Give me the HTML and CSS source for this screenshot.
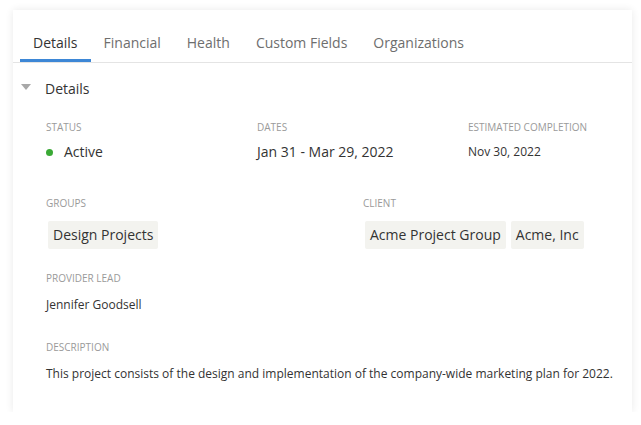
FILE: index.html
```html
<!DOCTYPE html>
<html lang="en">
<head>
    <meta charset="UTF-8">
    <title>Project Details</title>
    <link rel="stylesheet" href="styles.css">
</head>
<body>

<div class="card">
    <nav class="tabs">
        <a class="tab active">Details</a>
        <a class="tab">Financial</a>
        <a class="tab">Health</a>
        <a class="tab">Custom Fields</a>
        <a class="tab">Organizations</a>
    </nav>

    <section class="section">
        <header class="section-head">
            <span class="caret"></span>
            <h2>Details</h2>
        </header>

        <div class="row row-three">
            <div class="field">
                <div class="label">Status</div>
                <div class="value big"><span class="dot"></span>Active</div>
            </div>
            <div class="field">
                <div class="label">Dates</div>
                <div class="value big">Jan 31 - Mar 29, 2022</div>
            </div>
            <div class="field">
                <div class="label">Estimated Completion</div>
                <div class="value">Nov 30, 2022</div>
            </div>
        </div>

        <div class="row row-two">
            <div class="field">
                <div class="label">Groups</div>
                <div class="chips">
                    <span class="chip">Design Projects</span>
                </div>
            </div>
            <div class="field">
                <div class="label">Client</div>
                <div class="chips">
                    <span class="chip">Acme Project Group</span>
                    <span class="chip">Acme, Inc</span>
                </div>
            </div>
        </div>

        <div class="row row-lead">
            <div class="field">
                <div class="label">Provider Lead</div>
                <div class="value">Jennifer Goodsell</div>
            </div>
        </div>

        <div class="row row-desc">
            <div class="field">
                <div class="label">Description</div>
                <div class="value">This project consists of the design and implementation of the company-wide marketing plan for 2022.</div>
            </div>
        </div>
    </section>
</div>

</body>
</html>
```

FILE: styles.css
```css
html
{
    font-family: "Open Sans", "Liberation Sans", sans-serif;
    color: #333;
}

body
{
    margin: 0;
    background: #fff;
}

.card
{
    margin: 10px 9px 0 13px;
    height: 402px;
    background: #fff;
    box-shadow: 0 0 8px rgba(0, 0, 0, 0.09);
}

.tabs
{
    display: flex;
    padding-left: 7px;
    border-bottom: 1px solid #e4e4e4;
}

.tab
{
    padding: 23px 13px 6px;
    font-size: 14px;
    line-height: 20px;
    color: #6e6e6e;
    border-bottom: 3px solid transparent;
}

.tab.active
{
    color: #333;
    border-bottom-color: #3d87d6;
}

.section
{
    padding: 14px 0 0 8px;
}

.section-head
{
    display: flex;
    align-items: center;
    height: 22px;
}

.caret
{
    width: 0;
    height: 0;
    border-left: 5.5px solid transparent;
    border-right: 5.5px solid transparent;
    border-top: 6px solid #a8a8a8;
    margin: 0 14px 3px 0;
}

.section-head h2
{
    margin: 0;
    font-size: 14px;
    font-weight: normal;
}

.row
{
    display: flex;
    padding-left: 25px;
    margin-top: 21px;
}

.row-three .field:nth-child(1),
.row-three .field:nth-child(2)
{
    width: 211px;
}

.row-two
{
    margin-top: 34px;
}

.row-two .field:nth-child(1)
{
    width: 317px;
}

.row-lead
{
    margin-top: 22px;
}

.row-desc
{
    margin-top: 25px;
}

.label
{
    font-size: 10px;
    line-height: 14px;
    color: #9a9a9a;
    text-transform: uppercase;
}

.value
{
    margin-top: 10px;
    font-size: 12px;
    line-height: 20px;
}

.row-three .value
{
    margin-top: 8px;
}

.value.big
{
    font-size: 14px;
    display: flex;
    align-items: center;
}

.dot
{
    width: 7px;
    height: 7px;
    border-radius: 50%;
    background: #3aa935;
    margin-right: 11px;
}

.chips
{
    display: flex;
    gap: 5px;
    margin: 11px 0 0 2px;
}

.chip
{
    padding: 4px 5px;
    background: #f3f3ef;
    border-radius: 2px;
    font-size: 14px;
    line-height: 20px;
}
```
